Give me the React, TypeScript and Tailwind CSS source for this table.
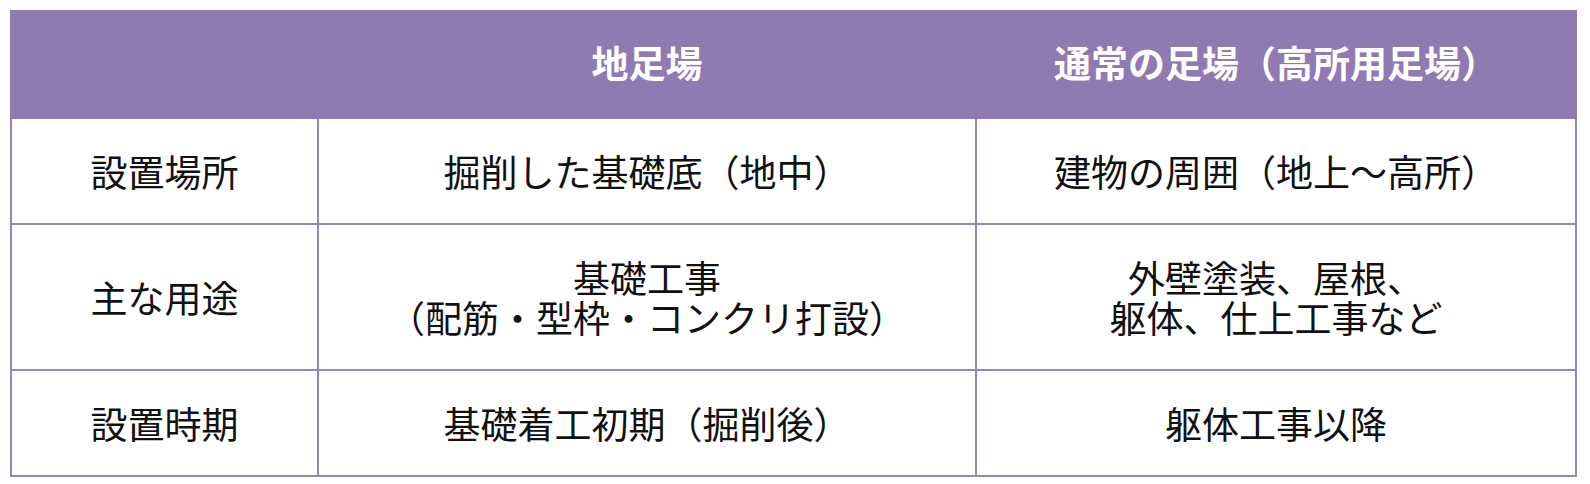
const rows: { label: string; a: string[]; b: string[] }[] = [
  { label: "設置場所", a: ["掘削した基礎底（地中）"], b: ["建物の周囲（地上〜高所）"] },
  {
    label: "主な用途",
    a: ["基礎工事", "（配筋・型枠・コンクリ打設）"],
    b: ["外壁塗装、屋根、", "躯体、仕上工事など"],
  },
  { label: "設置時期", a: ["基礎着工初期（掘削後）"], b: ["躯体工事以降"] },
];

const Lines = ({ lines }: { lines: string[] }) => (
  <>
    {lines.map((l, i) => (
      <div key={i}>{l}</div>
    ))}
  </>
);

export default function App() {
  return (
    <div className="w-[1590px] h-[484px] bg-white pt-[10px] pl-[10px] font-['Noto_Sans_CJK_JP','Noto_Sans',sans-serif]">
      <table className="table-fixed border-collapse w-[1565px] text-[37px] leading-[40px] text-[#111]">
        <colgroup>
          <col className="w-[307px]" />
          <col className="w-[658px]" />
          <col className="w-[600px]" />
        </colgroup>
        <thead>
          <tr className="bg-[#8f7bb2] text-white font-bold">
            <th className="h-[107px] pb-[6px] border-2 border-[#8f7bb2]"></th>
            <th className="h-[107px] pb-[6px] border-2 border-[#8f7bb2] text-center font-bold">地足場</th>
            <th className="h-[107px] pb-[6px] border-2 border-[#8f7bb2] text-center font-bold">通常の足場（高所用足場）</th>
          </tr>
        </thead>
        <tbody>
          {rows.map((r) => (
            <tr key={r.label}>
              <td className="border-2 border-[#9586b9] py-[32px] text-center align-middle">{r.label}</td>
              <td className="border-2 border-[#9586b9] py-[32px] text-center align-middle">
                <Lines lines={r.a} />
              </td>
              <td className="border-2 border-[#9586b9] py-[32px] text-center align-middle">
                <Lines lines={r.b} />
              </td>
            </tr>
          ))}
        </tbody>
      </table>
    </div>
  );
}
